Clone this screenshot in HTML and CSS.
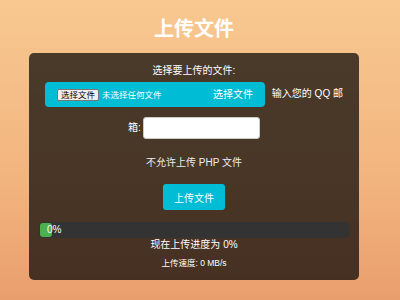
FILE: index.html
```html
<!DOCTYPE html>
<html lang="zh-CN">
<head>
    <meta charset="UTF-8">
    <meta name="viewport" content="width=device-width, initial-scale=1.0">
    <title>上传文件</title>
    <link rel="stylesheet" href="styles.css">
</head>
<body>
    <div class="page">
        <h1 class="page-title">上传文件</h1>

        <!-- 上传表单 -->
        <div class="upload-card">
            <p class="upload-hint">选择要上传的文件:</p>

            <div class="form-row">
                <label class="file-label"><span class="file-input"><span class="file-button">选择文件</span><span class="file-name">未选择任何文件</span></span><span class="file-text">选择文件</span></label>
                <span>输入您的 QQ 邮</span><br><span>箱:</span><input type="text" class="mail-input">
            </div>

            <p class="upload-note">不允许上传 PHP 文件</p>

            <button type="button" class="upload-btn">上传文件</button>

            <!-- 进度条 -->
            <div class="progress">
                <div class="progress-fill" style="width: 12px;"></div>
                <span class="progress-text">0%</span>
            </div>
            <p class="progress-status">现在上传进度为 0%</p>
            <p class="progress-speed">上传速度: 0 MB/s</p>
        </div>
    </div>
</body>
</html>
```

FILE: styles.css
```css
* {
    margin: 0;
    padding: 0;
    box-sizing: border-box;
}

body {
    font-family: 'Liberation Sans', 'Noto Sans CJK SC', sans-serif;
    background: linear-gradient(to bottom, #f8c891 0%, #f2b47f 60%, #e99e6e 100%);
    min-height: 100vh;
    overflow: hidden;
    color: #fff;
}

.page {
    padding-right: 12px;
}

.page-title {
    text-align: center;
    font-size: 20px;
    line-height: 24px;
    font-weight: bold;
    padding-top: 17px;
    margin-bottom: 12px;
}

/* 上传卡片 */
.upload-card {
    width: 330px;
    margin: 0 auto;
    background: rgba(0, 0, 0, 0.7);
    border-radius: 5px;
    padding: 12px 10px 11px;
    text-align: center;
    font-size: 10px;
    line-height: 14px;
}

.upload-hint {
    line-height: 12px;
}

.form-row {
    line-height: 14px;
}

.file-label {
    display: inline-flex;
    align-items: center;
    vertical-align: middle;
    height: 25px;
    margin: 5px 4px 5px 0;
    padding: 0 12px;
    background: #00bcd4;
    border-radius: 4px;
}

.file-input {
    display: flex;
    align-items: center;
    gap: 3px;
    width: 156px;
}

.file-button {
    background: #efefef;
    color: #000;
    border: 1px solid #767676;
    border-radius: 2px;
    font-size: 8.5px;
    line-height: 10px;
    padding: 0 3px;
}

.file-name {
    font-size: 8.5px;
}

.mail-input {
    display: inline-block;
    vertical-align: middle;
    width: 117px;
    height: 22px;
    margin: 5px 0 5px 2px;
    border: 1px solid #ccc;
    border-radius: 3px;
    background: #fff;
}

.upload-note {
    margin-top: 12px;
    color: #eee;
}

.upload-btn {
    display: block;
    margin: 14px auto 0;
    width: 62px;
    height: 26px;
    border: none;
    border-radius: 3px;
    background: #00bcd4;
    color: #fff;
    font-family: inherit;
    font-size: 10px;
}

/* 进度条 */
.progress {
    position: relative;
    display: flex;
    align-items: center;
    height: 16px;
    margin-top: 12px;
    padding: 0 1px;
    background: #333;
    border-radius: 4px;
}

.progress-fill {
    height: 14px;
    background: #4caf50;
    border-radius: 3px;
}

.progress-text {
    position: absolute;
    left: 8px;
    top: 1px;
    font-size: 10px;
    line-height: 14px;
}

.progress-status {
    line-height: 14px;
}

.progress-speed {
    margin-top: 5px;
    font-size: 8.5px;
    line-height: 12px;
}
```
